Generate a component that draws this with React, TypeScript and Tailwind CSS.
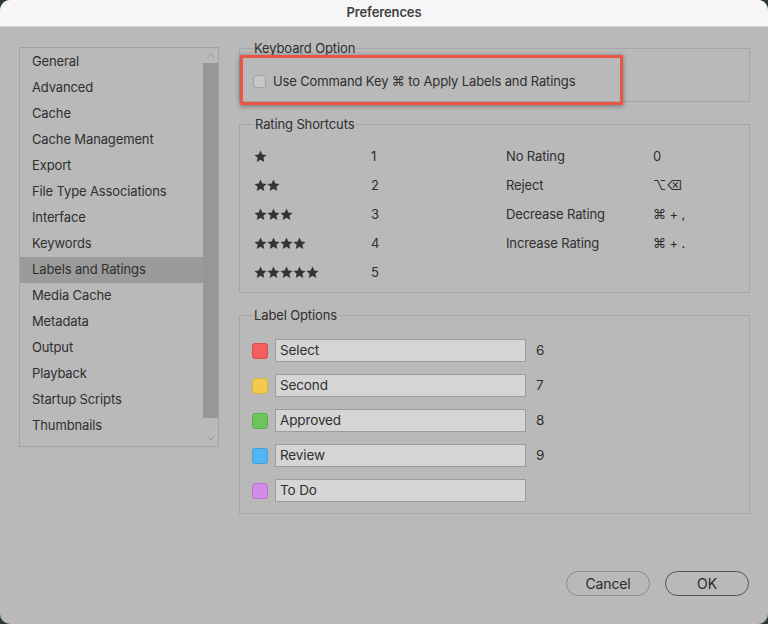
const sections = [
  "General",
  "Advanced",
  "Cache",
  "Cache Management",
  "Export",
  "File Type Associations",
  "Interface",
  "Keywords",
  "Labels and Ratings",
  "Media Cache",
  "Metadata",
  "Output",
  "Playback",
  "Startup Scripts",
  "Thumbnails",
];

const ratings = [
  { stars: 1, key: "1", label: "No Rating", shortcut: "0" },
  { stars: 2, key: "2", label: "Reject", shortcut: "⌥⌫" },
  { stars: 3, key: "3", label: "Decrease Rating", shortcut: "⌘ + ," },
  { stars: 4, key: "4", label: "Increase Rating", shortcut: "⌘ + ." },
  { stars: 5, key: "5", label: "", shortcut: "" },
];

const labels = [
  { name: "Select", color: "bg-[#f25f5c] border-[#d94d4a]", key: "6" },
  { name: "Second", color: "bg-[#f2cb4c] border-[#d9b23f]", key: "7" },
  { name: "Approved", color: "bg-[#6cc55a] border-[#5aaf4a]", key: "8" },
  { name: "Review", color: "bg-[#52b4f3] border-[#409ed9]", key: "9" },
  { name: "To Do", color: "bg-[#d28be6] border-[#b977cc]", key: "" },
];

function Star() {
  return (
    <svg width="13" height="13" viewBox="0 0 24 24" className="fill-[#333]">
      <path d="M12 1l3.3 7.2 7.9.8-5.9 5.3 1.7 7.8L12 18.1l-7 4 1.7-7.8L.8 9l7.9-.8z" />
    </svg>
  );
}

function Chevron({ down }: { down?: boolean }) {
  return (
    <svg width="8" height="5" viewBox="0 0 8 5" className={down ? "rotate-180" : ""}>
      <path d="M0.5 4.5L4 1l3.5 3.5" fill="none" stroke="#9a9a9a" strokeWidth="1" />
    </svg>
  );
}

export default function App() {
  return (
    <div className="w-[768px] h-[624px] bg-[#2b383c] font-['Inter','Liberation_Sans',sans-serif] text-[#2f2f2f] tracking-[-0.13px]">
      <div className="w-full h-full rounded-[10px] overflow-hidden bg-[#b9b9b9] flex flex-col">
        {/* Title bar */}
        <div className="h-[27px] bg-[#f6f6f6] border-b border-[#d0d0d0] flex items-center justify-center shrink-0">
          <span className="text-[13px] font-semibold text-[#404040] -mt-[1px]">Preferences</span>
        </div>

        <div className="flex items-start pl-[19px] pt-[12px] gap-[20px]">
          {/* Section list */}
          <div className="mt-[8px] w-[200px] h-[400px] border border-[#a3a3a3] flex">
            <div className="flex-1 flex flex-col pt-[1px]">
              {sections.map((s) => (
                <div
                  key={s}
                  className={`h-[26px] flex items-center pl-[12px] text-[13px] ${
                    s === "Labels and Ratings" ? "bg-[#9b9b9b]" : ""
                  }`}
                >
                  {s}
                </div>
              ))}
            </div>
            <div className="w-[15px] flex flex-col">
              <div className="h-[15px] flex items-center justify-center">
                <Chevron />
              </div>
              <div className="h-[355px] bg-[#979797]" />
              <div className="flex-1 flex items-end justify-center pb-[5px]">
                <Chevron down />
              </div>
            </div>
          </div>

          {/* Right column */}
          <div className="w-[511px] flex flex-col mt-[1px]">
            <div className="relative">
              <fieldset className="h-[62px] border border-[#a6a6a6] pl-[13px]">
                <legend className="text-[13px] leading-[16px] px-[1px]">Keyboard Option</legend>
                <div className="flex items-center gap-[7px] pt-[17px]">
                  <div className="w-[13px] h-[13px] rounded-[3px] bg-[#c6c6c6] border border-[#a3a3a3]" />
                  <span className="text-[13px] leading-[16px]">Use Command Key ⌘ to Apply Labels and Ratings</span>
                </div>
              </fieldset>
              {/* annotation */}
              <div className="absolute left-[1px] top-[15px] w-[383px] h-[50px] border-[3px] border-[#ea5548] shadow-[0_1px_5px_rgba(0,0,0,0.4)]" />
            </div>

            <fieldset className="mt-[14px] h-[177px] border border-[#a6a6a6] pl-[14px]">
              <legend className="text-[13px] leading-[16px] px-[1px]">Rating Shortcuts</legend>
              <div className="grid grid-cols-[117px_135px_147px_1fr] pt-[10px] text-[13px]">
                {ratings.map((r) => (
                  <div key={r.key} className="contents">
                    <div className="h-[29px] flex items-center">
                      {Array.from({ length: r.stars }).map((_, i) => (
                        <Star key={i} />
                      ))}
                    </div>
                    <div className="h-[29px] flex items-center">{r.key}</div>
                    <div className="h-[29px] flex items-center">{r.label}</div>
                    <div className="h-[29px] flex items-center">{r.shortcut}</div>
                  </div>
                ))}
              </div>
            </fieldset>

            <fieldset className="mt-[14px] h-[207px] border border-[#a6a6a6] pl-[12px]">
              <legend className="text-[13px] leading-[16px] px-[1px] ml-[1px]">Label Options</legend>
              <div className="flex flex-col pt-[10px]">
                {labels.map((l) => (
                  <div key={l.name} className="h-[35px] flex items-center">
                    <div className={`w-[16px] h-[16px] rounded-[3px] border ${l.color}`} />
                    <div className="ml-[7px] w-[251px] h-[23px] bg-[#d5d5d5] border border-[#9c9c9c] flex items-center pl-[4px] text-[13.5px]">
                      {l.name}
                    </div>
                    <span className="ml-[10px] text-[13.5px]">{l.key}</span>
                  </div>
                ))}
              </div>
            </fieldset>
          </div>
        </div>

        {/* Footer buttons */}
        <div className="mt-auto pb-[28px] pr-[19px] flex justify-end gap-[15px]">
          <button className="w-[84px] h-[25px] rounded-full border border-[#8c8c8c] text-[14px] text-[#2a2a2a]">
            Cancel
          </button>
          <button className="w-[84px] h-[25px] rounded-full border border-[#555] text-[14px] text-[#2a2a2a]">
            OK
          </button>
        </div>
      </div>
    </div>
  );
}
